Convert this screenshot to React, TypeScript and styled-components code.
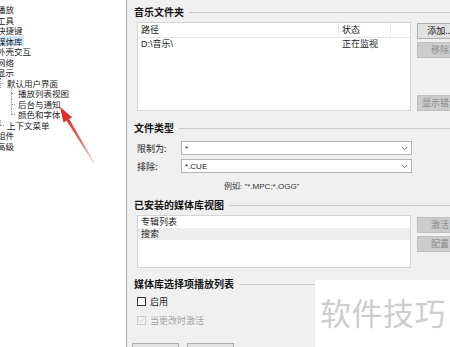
import React from 'react';
import styled, { createGlobalStyle } from 'styled-components';

type TreeItem = {
  label: string;
  level: number;
  selected?: boolean;
  last?: boolean;
};

const treeItems: TreeItem[] = [
  { label: '播放', level: 0 },
  { label: '工具', level: 0 },
  { label: '快捷键', level: 0 },
  { label: '媒体库', level: 0, selected: true },
  { label: '外壳交互', level: 0 },
  { label: '网络', level: 0 },
  { label: '显示', level: 0 },
  { label: '默认用户界面', level: 1 },
  { label: '播放列表视图', level: 2 },
  { label: '后台与通知', level: 2 },
  { label: '颜色和字体', level: 2, last: true },
  { label: '上下文菜单', level: 1, last: true },
  { label: '组件', level: 0 },
  { label: '高级', level: 0 },
];

const GlobalStyle = createGlobalStyle`
  html, body {
    margin: 0;
    padding: 0;
    background: #fff;
  }
  body {
    font-family: "Noto Sans CJK SC", "Liberation Sans", sans-serif;
  }
`;

const Window = styled.div`
  position: relative;
  width: 450px;
  height: 347px;
  display: flex;
  overflow: hidden;
  color: #1c1c1c;
  font-size: 9px;
`;

const Tree = styled.div`
  width: 126px;
  flex-shrink: 0;
  background: #fff;
  border-right: 1px solid #ababab;
  padding-top: 4px;
  overflow: hidden;
`;

const TreeRow = styled.div`
  display: flex;
  align-items: stretch;
  height: 10.5px;
  font-size: 8.5px;
  line-height: 10.5px;
  white-space: nowrap;
`;

const Stub = styled.span<{ $level: number; $last?: boolean }>`
  position: relative;
  width: 4px;
  flex-shrink: 0;
  margin-left: ${p => (p.$level - 1) * 11}px;
  margin-right: 2px;
  &::before {
    content: '';
    position: absolute;
    left: 0;
    top: 0;
    height: ${p => (p.$last ? '50%' : '100%')};
    border-left: 1px dotted #9a9a9a;
  }
  &::after {
    content: '';
    position: absolute;
    left: 0;
    right: 0;
    top: 50%;
    border-top: 1px dotted #9a9a9a;
  }
`;

const TreeLabel = styled.span<{ $root?: boolean; $selected?: boolean }>`
  margin-left: ${p => (p.$root ? '-4px' : '0')};
  padding: 0 1px;
  background: ${p => (p.$selected ? '#cde8ff' : 'transparent')};
`;

const Panel = styled.div`
  flex: 1;
  min-width: 0;
  background: #f0f0f0;
  padding: 6px 0 0 7px;
`;

const GroupTitle = styled.div<{ $gap?: number }>`
  display: flex;
  align-items: center;
  height: 12px;
  margin-top: ${p => p.$gap ?? 0}px;
  font-size: 10px;
  font-weight: bold;
  line-height: 12px;
  white-space: nowrap;
  color: #151515;
  &::after {
    content: '';
    flex: 1;
    margin-left: 5px;
    border-top: 1px solid #cbcbcb;
  }
`;

const Body = styled.div<{ $gap?: number }>`
  padding-left: 3px;
  margin-top: ${p => p.$gap ?? 0}px;
`;

const ListRow = styled.div`
  display: flex;
  gap: 6px;
`;

const ListView = styled.div<{ $height: number }>`
  width: 274px;
  height: ${p => p.$height}px;
  flex-shrink: 0;
  box-sizing: border-box;
  background: #fff;
  border: 1px solid #d4d4d4;
`;

const Grid = styled.div`
  display: grid;
  grid-template-columns: 201px 52px 1fr;
  height: 12px;
  line-height: 12px;
  white-space: nowrap;
`;

const HeaderGrid = styled(Grid)`
  height: 14px;
  line-height: 14px;
  border-bottom: 1px solid #e6e6e6;
`;

const Cell = styled.span<{ $header?: boolean }>`
  padding-left: 3px;
  border-right: ${p => (p.$header ? '1px solid #e6e6e6' : 'none')};
  font-family: "Liberation Sans", "Noto Sans CJK SC", sans-serif;
`;

const ListItem = styled.div<{ $selected?: boolean }>`
  height: 12px;
  line-height: 12px;
  padding-left: 3px;
  background: ${p => (p.$selected ? '#ededed' : 'transparent')};
`;

const ButtonColumn = styled.div<{ $pad?: number }>`
  display: flex;
  flex-direction: column;
  gap: 3px;
  padding-top: ${p => p.$pad ?? 0}px;
`;

const Button = styled.div<{ $disabled?: boolean; $width?: number; $push?: boolean }>`
  width: ${p => p.$width ?? 46}px;
  height: 16px;
  flex-shrink: 0;
  box-sizing: border-box;
  margin-top: ${p => (p.$push ? 'auto' : '0')};
  background: ${p => (p.$disabled ? '#cccccc' : '#e1e1e1')};
  border: 1px solid ${p => (p.$disabled ? '#bfbfbf' : '#adadad')};
  color: ${p => (p.$disabled ? '#8a8a8a' : '#1c1c1c')};
  text-align: center;
  line-height: 14px;
  white-space: nowrap;
`;

const FieldRow = styled.div<{ $gap: number }>`
  display: flex;
  align-items: center;
  margin-top: ${p => p.$gap}px;
`;

const FieldLabel = styled.span`
  width: 44px;
  flex-shrink: 0;
`;

const Combo = styled.div`
  width: 231px;
  height: 14px;
  box-sizing: border-box;
  display: flex;
  align-items: center;
  justify-content: space-between;
  padding: 0 3px;
  background: #fff;
  border: 1px solid #b3b3b3;
  font-family: "Liberation Sans", sans-serif;
  font-size: 8px;
`;

const Hint = styled.div`
  margin: 9px 0 0 87px;
  height: 10px;
  line-height: 10px;
  font-size: 8px;
  font-family: "Liberation Sans", "Noto Sans CJK SC", sans-serif;
  color: #333;
  white-space: nowrap;
`;

const CheckRow = styled.label<{ $gap: number; $disabled?: boolean }>`
  display: flex;
  align-items: center;
  gap: 4px;
  height: 12px;
  margin-top: ${p => p.$gap}px;
  color: ${p => (p.$disabled ? '#a3a3a3' : '#1c1c1c')};
`;

const Box = styled.span<{ $disabled?: boolean }>`
  width: 9px;
  height: 9px;
  box-sizing: border-box;
  display: flex;
  align-items: center;
  justify-content: center;
  background: ${p => (p.$disabled ? '#f3f3f3' : '#fff')};
  border: 1px solid ${p => (p.$disabled ? '#cccccc' : '#333')};
`;

const BottomButtons = styled.div`
  display: flex;
  gap: 8px;
  margin: 17px 0 0 -2px;
`;

const Watermark = styled.div`
  position: absolute;
  left: 315px;
  top: 280px;
  right: 0;
  bottom: 0;
  background: #fff;
  padding: 16px 0 0 5px;
  font-size: 31px;
  line-height: 31px;
  color: #cdcdcd;
  white-space: nowrap;
  letter-spacing: 0.5px;
`;

const ArrowLayer = styled.svg`
  position: absolute;
  left: 0;
  top: 0;
  pointer-events: none;
`;

const Chevron = () => (
  <svg width="7" height="5" viewBox="0 0 7 5">
    <path d="M0.8 1 L3.5 3.7 L6.2 1" fill="none" stroke="#666" strokeWidth="0.9" />
  </svg>
);

const Check = () => (
  <svg width="7" height="7" viewBox="0 0 7 7">
    <path d="M1 3.6 L2.8 5.3 L6 1.4" fill="none" stroke="#cfcfcf" strokeWidth="1" />
  </svg>
);

const Arrow = () => (
  <ArrowLayer width="130" height="175" viewBox="0 0 130 175">
    <defs>
      <linearGradient id="shaft" x1="94" y1="163" x2="66" y2="119" gradientUnits="userSpaceOnUse">
        <stop offset="0" stopColor="#e0413b" stopOpacity="0.25" />
        <stop offset="0.5" stopColor="#e0413b" stopOpacity="0.8" />
        <stop offset="1" stopColor="#dd2f2a" />
      </linearGradient>
    </defs>
    <polygon points="69.2,119 66.4,120.6 93.6,163.2 94.4,162.8" fill="url(#shaft)" />
    <polygon points="60,107 72.1,117.2 63.5,122.4" fill="#dd2f2a" />
  </ArrowLayer>
);

export default function App() {
  return (
    <>
      <GlobalStyle />
      <Window>
        <Tree>
          {treeItems.map(item => (
            <TreeRow key={item.label}>
              {item.level > 0 && <Stub $level={item.level} $last={item.last} />}
              <TreeLabel $root={item.level === 0} $selected={item.selected}>
                {item.label}
              </TreeLabel>
            </TreeRow>
          ))}
        </Tree>

        <Panel>
          <GroupTitle>音乐文件夹</GroupTitle>
          <Body $gap={4}>
            <ListRow>
              <ListView $height={89}>
                <HeaderGrid>
                  <Cell $header>路径</Cell>
                  <Cell $header>状态</Cell>
                  <span />
                </HeaderGrid>
                <Grid>
                  <Cell>D:\音乐\</Cell>
                  <Cell>正在监视</Cell>
                  <span />
                </Grid>
              </ListView>
              <ButtonColumn $pad={1}>
                <Button>添加...</Button>
                <Button $disabled>移除</Button>
                <Button $disabled $push>显示错误</Button>
              </ButtonColumn>
            </ListRow>
          </Body>

          <GroupTitle $gap={11}>文件类型</GroupTitle>
          <Body>
            <FieldRow $gap={7}>
              <FieldLabel>限制为:</FieldLabel>
              <Combo>
                <span>*</span>
                <Chevron />
              </Combo>
            </FieldRow>
            <FieldRow $gap={4}>
              <FieldLabel>排除:</FieldLabel>
              <Combo>
                <span>*.CUE</span>
                <Chevron />
              </Combo>
            </FieldRow>
            <Hint>例如: "*.MPC;*.OGG"</Hint>
          </Body>

          <GroupTitle $gap={7}>已安装的媒体库视图</GroupTitle>
          <Body $gap={4}>
            <ListRow>
              <ListView $height={53}>
                <ListItem>专辑列表</ListItem>
                <ListItem $selected>搜索</ListItem>
              </ListView>
              <ButtonColumn $pad={2}>
                <Button $disabled>激活</Button>
                <Button $disabled>配置</Button>
              </ButtonColumn>
            </ListRow>
          </Body>

          <GroupTitle $gap={10}>媒体库选择项播放列表</GroupTitle>
          <Body>
            <CheckRow $gap={5}>
              <Box />
              启用
            </CheckRow>
            <CheckRow $gap={7} $disabled>
              <Box $disabled>
                <Check />
              </Box>
              当更改时激活
            </CheckRow>
          </Body>
          <BottomButtons>
            <Button $width={47} />
            <Button $width={47} />
          </BottomButtons>
        </Panel>

        <Arrow />
        <Watermark>软件技巧</Watermark>
      </Window>
    </>
  );
}
